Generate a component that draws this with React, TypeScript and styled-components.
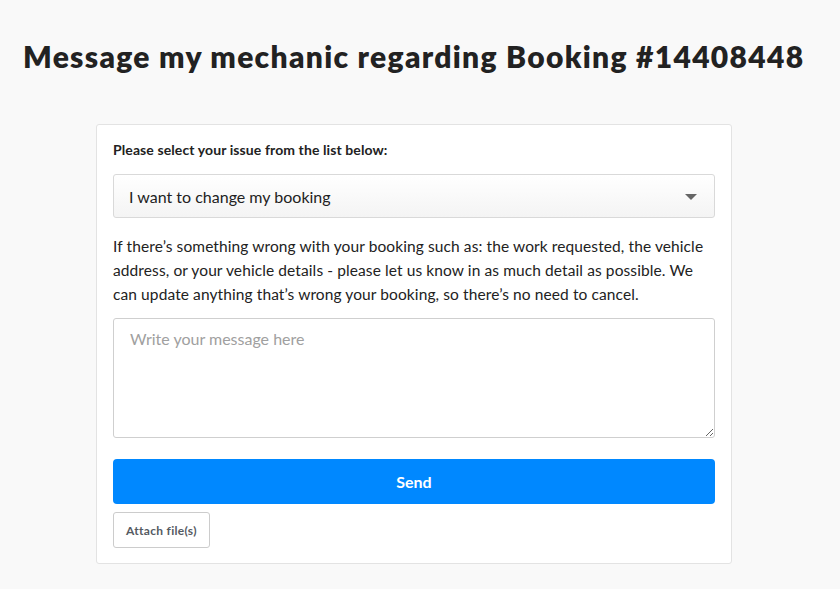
import { FC } from 'react';
import styled, { createGlobalStyle } from 'styled-components';

const GlobalStyle = createGlobalStyle`
  html, body {
    margin: 0;
    padding: 0;
    background: #f9f9f9;
  }
  body {
    font-family: Lato, "Open Sans", sans-serif;
    color: #222;
  }
`;

const App: FC = () => {
  return (
    <PageStyled>
      <GlobalStyle />
      <h1 className="page-title">Message my mechanic regarding Booking #14408448</h1>

      <CardStyled>
        <label className="card__label" htmlFor="issue">
          Please select your issue from the list below:
        </label>

        <SelectWrap>
          <select id="issue" defaultValue="change">
            <option value="change">I want to change my booking</option>
            <option value="cancel">I want to cancel my booking</option>
            <option value="other">Something else</option>
          </select>
          <span className="select__arrow" />
        </SelectWrap>

        <p className="card__help">
          If there’s something wrong with your booking such as: the work requested, the vehicle
          address, or your vehicle details - please let us know in as much detail as possible. We
          can update anything that’s wrong your booking, so there’s no need to cancel.
        </p>

        <MessageArea placeholder="Write your message here" />

        <Button $variant="primary">Send</Button>
        <Button $variant="ghost">Attach file(s)</Button>
      </CardStyled>
    </PageStyled>
  );
};

const PageStyled = styled.div`
  display: flex;
  flex-direction: column;
  align-items: flex-start;
  padding: 38px 0 25px;

  & .page-title {
    margin: 0 0 0 23px;
    font-size: 30px;
    line-height: 36px;
    font-weight: 800;
    color: #222;
    letter-spacing: 1.3px;
  }
`;

const CardStyled = styled.div`
  box-sizing: border-box;
  width: 636px;
  margin: 50px 0 0 96px;
  padding: 16px 16px 15px;
  background: #fff;
  border: 1px solid #e3e3e3;
  border-radius: 3px;
  display: flex;
  flex-direction: column;
  align-items: flex-start;

  & .card__label {
    font-size: 14px;
    line-height: 17px;
    font-weight: 700;
    letter-spacing: 0.1px;
    color: #222;
  }

  & .card__help {
    margin: 16px 0 12px;
    font-size: 15.5px;
    line-height: 24px;
    letter-spacing: 0.1px;
    color: #222;
  }
`;

const SelectWrap = styled.div`
  position: relative;
  width: 100%;
  margin-top: 16px;

  & select {
    appearance: none;
    box-sizing: border-box;
    width: 100%;
    height: 44px;
    padding: 0 40px 0 15px;
    font-family: Lato, "Open Sans", sans-serif;
    font-size: 16px;
    color: #222;
    background: linear-gradient(#fff, #f4f4f4);
    border: 1px solid #d9d9d9;
    border-radius: 3px;
  }

  & .select__arrow {
    position: absolute;
    right: 18px;
    top: 20px;
    width: 0;
    height: 0;
    border-left: 6px solid transparent;
    border-right: 6px solid transparent;
    border-top: 6px solid #666;
    pointer-events: none;
  }
`;

const MessageArea = styled.textarea`
  box-sizing: border-box;
  width: 100%;
  height: 120px;
  padding: 10px 16px;
  font-family: Lato, "Open Sans", sans-serif;
  font-size: 16px;
  line-height: 20px;
  color: #222;
  border: 1px solid #cfcfcf;
  border-radius: 3px;
  resize: vertical;

  &::placeholder {
    color: #a0a0a0;
  }
`;

const Button = styled.button<{ $variant: 'primary' | 'ghost' }>`
  box-sizing: border-box;
  font-family: Lato, "Open Sans", sans-serif;
  font-weight: 700;
  cursor: pointer;

  ${({ $variant }) =>
    $variant === 'primary'
      ? `
    width: 100%;
    height: 45px;
    margin-top: 21px;
    font-size: 16px;
    color: #fff;
    background: #0088ff;
    border: none;
    border-radius: 4px;
  `
      : `
    height: 36px;
    margin-top: 8px;
    padding: 0 12px;
    font-size: 12px;
    letter-spacing: 0.3px;
    color: #555a62;
    background: #fff;
    border: 1px solid #cccccc;
    border-radius: 3px;
  `}
`;

export default App;
